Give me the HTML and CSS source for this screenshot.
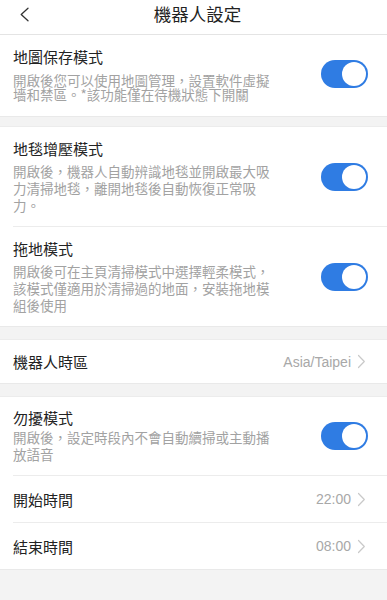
FILE: index.html
```html
<!DOCTYPE html>
<html lang="zh-Hant">
<head>
<meta charset="utf-8">
<title>機器人設定</title>
<link rel="stylesheet" href="styles.css">
</head>
<body>
<header class="nav">
  <span class="back">
    <svg width="11" height="15" viewBox="0 0 11 15"><path d="M9 1.2 L2.2 7.5 L9 13.8" fill="none" stroke="#333" stroke-width="1.3" stroke-linecap="round" stroke-linejoin="round"/></svg>
  </span>
  <h1 class="nav-title">機器人設定</h1>
  <span class="nav-side"></span>
</header>

<section class="group">
  <div class="item item-tight">
    <div class="text">
      <div class="title">地圖保存模式</div>
      <div class="desc desc-tight">開啟後您可以使用地圖管理，設置軟件虛擬墻和禁區。*該功能僅在待機狀態下開關</div>
    </div>
    <span class="switch"><span class="knob"></span></span>
  </div>
</section>

<section class="group gap-sm">
  <div class="item">
    <div class="text">
      <div class="title">地毯增壓模式</div>
      <div class="desc">開啟後，機器人自動辨識地毯並開啟最大吸力清掃地毯，離開地毯後自動恢復正常吸力。</div>
    </div>
    <span class="switch"><span class="knob"></span></span>
  </div>
  <div class="item">
    <div class="text">
      <div class="title">拖地模式</div>
      <div class="desc">開啟後可在主頁清掃模式中選擇輕柔模式，該模式僅適用於清掃過的地面，安裝拖地模組後使用</div>
    </div>
    <span class="switch"><span class="knob"></span></span>
  </div>
</section>

<section class="group gap-lg">
  <div class="row row-short">
    <span class="label">機器人時區</span>
    <span class="value">Asia/Taipei</span>
    <svg class="chev" width="9" height="15" viewBox="0 0 9 15"><path d="M1.5 1.5 L7.3 7.5 L1.5 13.5" fill="none" stroke="#c9c9c9" stroke-width="1.2" stroke-linecap="round" stroke-linejoin="round"/></svg>
  </div>
</section>

<section class="group gap-lg">
  <div class="item item-compact">
    <div class="text">
      <div class="title">勿擾模式</div>
      <div class="desc desc-close">開啟後，設定時段內不會自動續掃或主動播放語音</div>
    </div>
    <span class="switch"><span class="knob"></span></span>
  </div>
  <div class="row">
    <span class="label">開始時間</span>
    <span class="value">22:00</span>
    <svg class="chev" width="9" height="15" viewBox="0 0 9 15"><path d="M1.5 1.5 L7.3 7.5 L1.5 13.5" fill="none" stroke="#c9c9c9" stroke-width="1.2" stroke-linecap="round" stroke-linejoin="round"/></svg>
  </div>
  <div class="row">
    <span class="label">結束時間</span>
    <span class="value">08:00</span>
    <svg class="chev" width="9" height="15" viewBox="0 0 9 15"><path d="M1.5 1.5 L7.3 7.5 L1.5 13.5" fill="none" stroke="#c9c9c9" stroke-width="1.2" stroke-linecap="round" stroke-linejoin="round"/></svg>
  </div>
</section>
</body>
</html>
```

FILE: styles.css
```css
* { box-sizing: border-box; }

html, body {
  margin: 0;
  padding: 0;
}

body {
  background: #f3f3f3;
  font-family: "Noto Sans CJK TC", "Noto Sans", sans-serif;
  color: #222;
  min-height: 600px;
}

.nav {
  height: 35px;
  background: #fff;
  border-bottom: 1px solid #e4e4e4;
  display: grid;
  grid-template-columns: 50px 1fr 50px;
  align-items: center;
}

.back {
  display: flex;
  align-items: center;
  padding-left: 19px;
  height: 100%;
  padding-bottom: 6px;
}

.nav-title {
  margin: 0;
  text-align: center;
  font-size: 17.5px;
  font-weight: 400;
  line-height: 22px;
  color: #222;
  padding-bottom: 7px;
  padding-left: 8px;
}

.group {
  background: #fff;
  border-bottom: 1px solid #e9e9e9;
}

.gap-sm {
  margin-top: 9px;
  border-top: 1px solid #ececec;
}

.gap-lg {
  margin-top: 12px;
  border-top: 1px solid #ececec;
}

.item {
  display: flex;
  align-items: center;
  margin-left: 13px;
  padding: 12px 19px 12px 0;
}

.item-tight {
  padding-bottom: 15px;
}

.item-compact {
  padding-top: 11px;
  padding-bottom: 12px;
}

.item + .item,
.item + .row,
.row + .row {
  border-top: 1px solid #ececec;
}

.text {
  width: 262px;
}

.title {
  font-size: 15px;
  line-height: 20px;
  color: #222;
}

.desc {
  margin-top: 4px;
  font-size: 13.5px;
  line-height: 17px;
  color: #a2a2a2;
}

.desc-tight {
  margin-top: 6px;
  line-height: 14px;
}

.desc-close {
  margin-top: 1px;
}

.switch {
  margin-left: auto;
  flex: none;
  width: 47px;
  height: 28px;
  border-radius: 14px;
  background: #2f7ce3;
  display: flex;
  align-items: center;
  justify-content: flex-end;
  padding: 2px;
}

.knob {
  width: 24px;
  height: 24px;
  border-radius: 50%;
  background: #fff;
}

.row {
  display: flex;
  align-items: center;
  height: 47px;
  margin-left: 13px;
  padding-right: 21px;
}

.row-short {
  height: 43px;
}

.label {
  font-size: 15px;
  color: #222;
}

.value {
  margin-left: auto;
  font-family: "Liberation Sans", "Noto Sans CJK TC", sans-serif;
  font-size: 14px;
  color: #a8a8a8;
}

.chev {
  margin-left: 6px;
  flex: none;
}
```
